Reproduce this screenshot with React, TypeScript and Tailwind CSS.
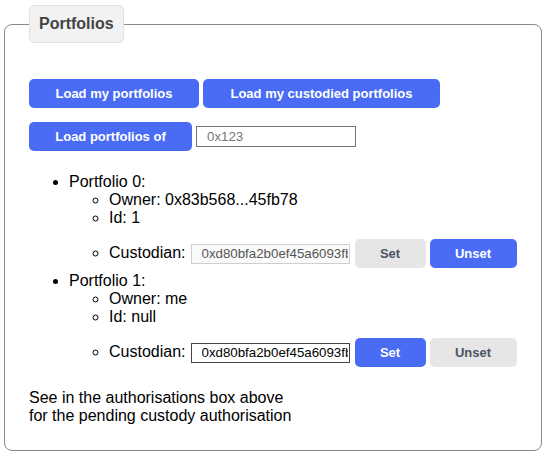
const blueBtn =
  "h-[29px] rounded-[5px] bg-[#4a6cf4] px-[25px] text-[13px] font-bold text-white";
const greyBtn =
  "h-[29px] rounded-[5px] bg-[#e6e6e6] px-[25px] text-[13px] font-bold text-[#4b5563]";

function Custodian({ editable }: { editable: boolean }) {
  return (
    <li className="pt-[12px] pb-[4px]">
      Custodian:
      <input
        readOnly
        value="0xd80bfa2b0ef45a6093fbc1a2e3d4"
        className={
          "ml-[5px] inline-block h-[20px] w-[159px] pl-[10px] pr-[1px] align-middle text-[13.3px] " +
          (editable
            ? "border border-[#444] bg-white text-black"
            : "border border-[#cfcfcf] bg-[#fafafa] text-[#555]")
        }
      />
      <button className={"ml-[5px] inline-block w-[71px] px-0 align-middle " + (editable ? blueBtn : greyBtn)}>
        Set
      </button>
      <button className={"ml-[4px] inline-block w-[87px] px-0 align-middle " + (editable ? greyBtn : blueBtn)}>
        Unset
      </button>
    </li>
  );
}

export default function App() {
  return (
    <div className="h-[453px] w-[548px] bg-white pt-[5px] font-['Liberation_Sans',Arial,sans-serif] text-[16px] leading-[normal] text-black">
      <fieldset className="ml-[4px] h-[446px] w-[538px] rounded-[8px] border border-[#8a8a8a] px-[24px] pt-[36px]">
        <legend className="rounded-[5px] border border-[#e2e2e2] bg-[#f2f2f2] px-[9px] py-[9px] text-[16px] leading-[18px] font-bold text-[#444]">
          Portfolios
        </legend>

        <div className="flex gap-[4px]">
          <button className={blueBtn + " w-[170px] px-0"}>Load my portfolios</button>
          <button className={blueBtn + " w-[237px] px-0"}>Load my custodied portfolios</button>
        </div>
        <div className="mt-[14px] flex items-center gap-[4px]">
          <button className={blueBtn + " w-[163px] px-0"}>Load portfolios of</button>
          <input
            placeholder="0x123"
            className="h-[21px] w-[160px] border border-[#767676] px-[10px] text-[13.3px] placeholder:text-[#777]"
          />
        </div>

        <ul className="mt-[22px] list-disc pl-[40px]">
          <li>
            Portfolio 0:
            <ul className="list-[circle] pl-[40px]">
              <li>Owner: 0x83b568...45fb78</li>
              <li>Id: 1</li>
              <Custodian editable={false} />
            </ul>
          </li>
          <li>
            Portfolio 1:
            <ul className="list-[circle] pl-[40px]">
              <li>Owner: me</li>
              <li>Id: null</li>
              <Custodian editable={true} />
            </ul>
          </li>
        </ul>

        <p className="mt-[18px] leading-[18px]">
          See in the authorisations box above
          <br />
          for the pending custody authorisation
        </p>
      </fieldset>
    </div>
  );
}
